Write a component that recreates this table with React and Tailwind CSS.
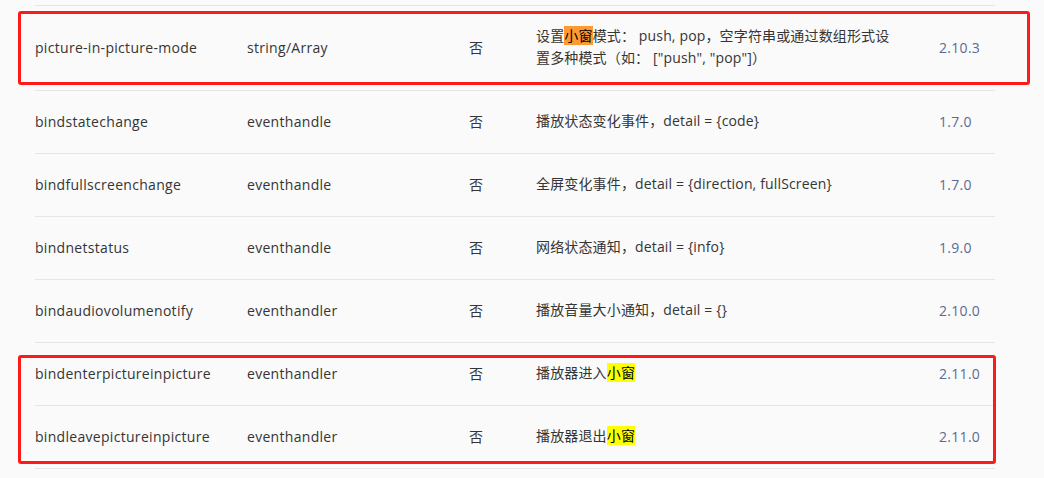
import React from "react";

const rows = [
  {
    name: "picture-in-picture-mode",
    type: "string/Array",
    req: "否",
    desc: (
      <>
        设置<span className="bg-[#ff9a33] text-black">小窗</span>模式： push, pop，空字符串或通过数组形式设
        <br />
        置多种模式（如： ["push", "pop"]）
      </>
    ),
    ver: "2.10.3",
    tall: true,
  },
  { name: "bindstatechange", type: "eventhandle", req: "否", desc: "播放状态变化事件，detail = {code}", ver: "1.7.0" },
  { name: "bindfullscreenchange", type: "eventhandle", req: "否", desc: "全屏变化事件，detail = {direction, fullScreen}", ver: "1.7.0" },
  { name: "bindnetstatus", type: "eventhandle", req: "否", desc: "网络状态通知，detail = {info}", ver: "1.9.0" },
  { name: "bindaudiovolumenotify", type: "eventhandler", req: "否", desc: "播放音量大小通知，detail = {}", ver: "2.10.0" },
  {
    name: "bindenterpictureinpicture",
    type: "eventhandler",
    req: "否",
    desc: (
      <>
        播放器进入<span className="bg-[#ffff00] text-black">小窗</span>
      </>
    ),
    ver: "2.11.0",
  },
  {
    name: "bindleavepictureinpicture",
    type: "eventhandler",
    req: "否",
    desc: (
      <>
        播放器退出<span className="bg-[#ffff00] text-black">小窗</span>
      </>
    ),
    ver: "2.11.0",
  },
];

export default function App() {
  return (
    <div
      className="relative w-[1044px] h-[478px] overflow-hidden bg-[#fafafa] pt-[5px] pl-[35px] text-[14px] text-[#353535]"
      style={{ fontFamily: '"Segoe UI", "Open Sans", "Noto Sans CJK SC", sans-serif' }}
    >
      {/* table */}
      <div className="w-[960px] border-t border-[#e6e6e6]">
        {rows.map((r) => (
          <div
            key={r.name}
            className={`flex items-center pb-[2px] border-b border-[#e6e6e6] ${r.tall ? "h-[85px]" : "h-[63px]"}`}
          >
            <div className="w-[212px] tracking-[0.3px]">{r.name}</div>
            <div className="w-[222px] tracking-[0.3px]">{r.type}</div>
            <div className="w-[67px]">{r.req}</div>
            <div className="w-[403px] leading-[22px] tracking-[0.15px]">{r.desc}</div>
            <div className="w-[56px] text-[#5b6b95] tracking-[0.3px]">{r.ver}</div>
          </div>
        ))}
      </div>

      {/* annotation boxes */}
      <div className="absolute left-[18px] top-[11px] w-[1012px] h-[74px] border-[3px] border-[#ff1a1a] rounded-[3px]" />
      <div className="absolute left-[18px] top-[355px] w-[978px] h-[109px] border-[3px] border-[#ff1a1a] rounded-[3px]" />
    </div>
  );
}
